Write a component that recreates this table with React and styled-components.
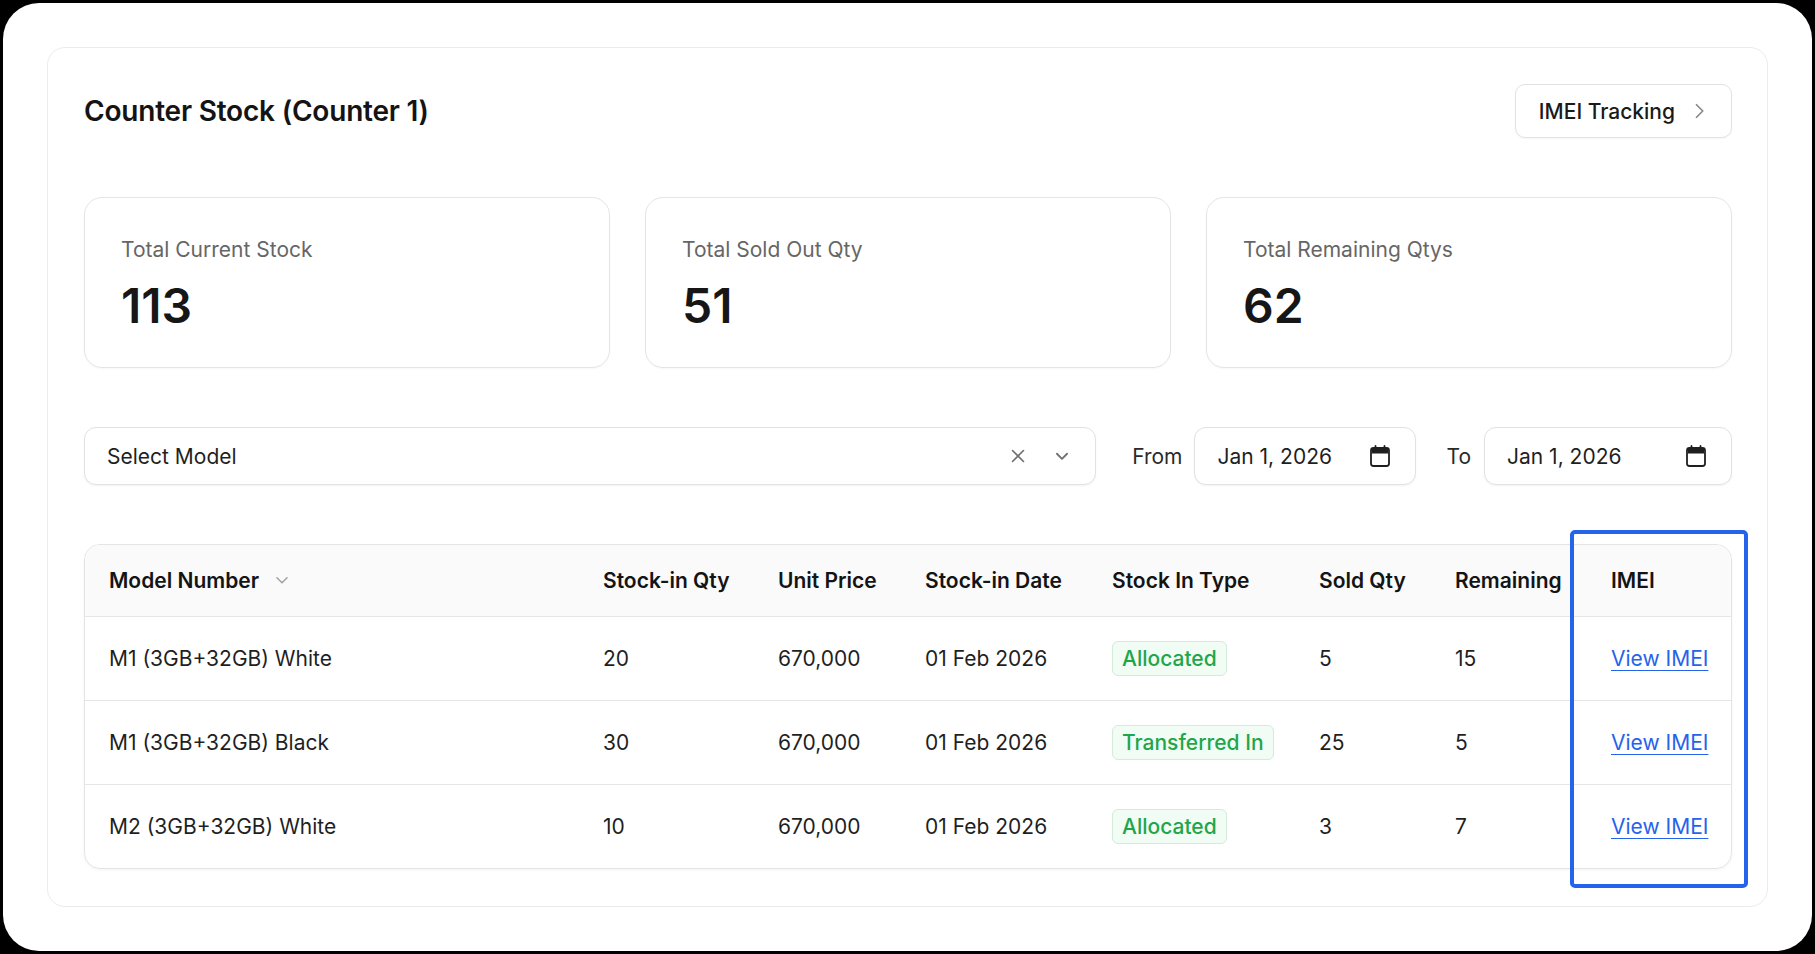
import React from 'react';
import styled, { createGlobalStyle } from 'styled-components';

const GlobalStyle = createGlobalStyle`
  * { box-sizing: border-box; }
  html, body { margin: 0; padding: 0; background: #000; }
  body { font-family: Inter, "Noto Sans", Arial, sans-serif; color: #1a1a1a; }
`;

const Frame = styled.div`
  margin: 3px;
  height: 948px;
  background: #fff;
  border-radius: 36px;
  padding: 44px 44px 0 44px;
`;

const Card = styled.div`
  border: 1px solid #ececec;
  border-radius: 18px;
  padding: 36px 35px 37px 36px;
  display: flex;
  flex-direction: column;
  gap: 59px;
`;

const Header = styled.div`
  display: flex;
  justify-content: space-between;
  align-items: center;
  height: 54px;
`;

const Title = styled.h1`
  margin: 0;
  font-size: 28px;
  font-weight: 600;
  color: #141414;
  letter-spacing: -0.2px;
`;

const OutlineButton = styled.button`
  display: flex;
  align-items: center;
  gap: 14px;
  height: 54px;
  padding: 0 22px 0 23px;
  background: #fff;
  border: 1px solid #e2e2e2;
  border-radius: 10px;
  font-family: inherit;
  font-size: 21px;
  font-weight: 500;
  color: #1a1a1a;
  box-shadow: 0 1px 2px rgba(0, 0, 0, 0.04);
`;

const Stats = styled.div`
  display: grid;
  grid-template-columns: repeat(3, 1fr);
  gap: 35px;
`;

const StatCard = styled.div`
  height: 171px;
  border: 1px solid #e4e4e4;
  border-radius: 18px;
  padding: 39px 36px 0;
  box-shadow: 0 1px 2px rgba(0, 0, 0, 0.03);
`;

const StatLabel = styled.div`
  font-size: 21px;
  line-height: 26px;
  color: #666;
`;

const StatValue = styled.div`
  margin-top: 15px;
  font-size: 48px;
  line-height: 56px;
  font-weight: 600;
  color: #161616;
`;

const Filters = styled.div`
  display: flex;
  align-items: center;
  height: 58px;
`;

const Field = styled.div`
  display: flex;
  align-items: center;
  height: 58px;
  flex: ${p => (p.$grow ? 1 : 'none')};
  width: ${p => (p.$width ? `${p.$width}px` : 'auto')};
  padding: 0 24px 0 22px;
  border: 1px solid #e2e2e2;
  border-radius: 12px;
  background: #fff;
  box-shadow: 0 1px 2px rgba(0, 0, 0, 0.05);
  font-size: 21px;
  color: #1f1f1f;
`;

const FieldText = styled.span`
  flex: 1;
`;

const FieldIcons = styled.span`
  display: flex;
  align-items: center;
  gap: 26px;
  color: #777;
`;

const FilterLabel = styled.span`
  font-size: 21px;
  color: #2a2a2a;
  margin: ${p => p.$margin};
`;

const TableWrap = styled.div`
  position: relative;
`;

const TableBox = styled.div`
  border: 1px solid #e4e4e4;
  border-radius: 16px;
  overflow: hidden;
  box-shadow: 0 1px 3px rgba(0, 0, 0, 0.05);
`;

const Table = styled.table`
  width: 100%;
  border-collapse: collapse;
  table-layout: fixed;
`;

const Th = styled.th`
  height: 71px;
  padding: 0 0 0 24px;
  background: #fafafa;
  text-align: left;
  font-size: 21px;
  font-weight: 600;
  color: #141414;
  border-bottom: 1px solid #e6e6e6;
  white-space: nowrap;
`;

const ThInner = styled.span`
  display: inline-flex;
  align-items: center;
  gap: 14px;
`;

const Tr = styled.tr`
  & + & td { border-top: 1px solid #e6e6e6; }
`;

const Td = styled.td`
  height: 84px;
  padding: 0 0 0 24px;
  font-size: 21px;
  color: #1f1f1f;
  white-space: nowrap;
`;

const Badge = styled.span`
  display: inline-block;
  height: 35px;
  line-height: 33px;
  padding: 0 9px;
  border: 1px solid #d3ebd9;
  border-radius: 6px;
  background: #f1fcf4;
  color: #1ea64a;
  font-size: 21px;
  font-weight: 500;
`;

const Link = styled.a`
  color: #2563eb;
  font-size: 21px;
  text-decoration: underline;
  text-underline-offset: 4px;
  text-decoration-thickness: 1px;
`;

const Highlight = styled.div`
  position: absolute;
  top: -14px;
  right: -16px;
  bottom: -19px;
  width: 178px;
  border: 4px solid #2563eb;
  border-radius: 5px;
  pointer-events: none;
`;

const Chevron = ({ dir = 'down', size = 16, color = 'currentColor', width = 1.6 }) => (
  <svg width={size} height={size} viewBox="0 0 16 16" fill="none" stroke={color} strokeWidth={width} strokeLinecap="round" strokeLinejoin="round">
    {dir === 'down' ? <path d="M3.5 6l4.5 4.5L12.5 6" /> : <path d="M6 3l5 5-5 5" />}
  </svg>
);

const CloseIcon = () => (
  <svg width="18" height="18" viewBox="0 0 18 18" fill="none" stroke="#6f6f6f" strokeWidth="1.6" strokeLinecap="round">
    <path d="M3.5 3.5l11 11M14.5 3.5l-11 11" />
  </svg>
);

const CalendarIcon = () => (
  <svg width="22" height="24" viewBox="0 0 22 24" fill="none">
    <rect x="2" y="4" width="18" height="18" rx="2.5" stroke="#1f1f1f" strokeWidth="1.8" />
    <path d="M2.9 5.5a1.6 1.6 0 011.6-1.6h13a1.6 1.6 0 011.6 1.6V9.5H2.9z" fill="#1f1f1f" />
    <path d="M6.5 2v4M15.5 2v4" stroke="#1f1f1f" strokeWidth="1.8" strokeLinecap="round" />
  </svg>
);

const stats = [
  { label: 'Total Current Stock', value: 113 },
  { label: 'Total Sold Out Qty', value: 51 },
  { label: 'Total Remaining Qtys', value: 62 },
];

const columns = [
  { key: 'model', title: 'Model Number', width: 494, sort: true },
  { key: 'qty', title: 'Stock-in Qty', width: 175 },
  { key: 'price', title: 'Unit Price', width: 147 },
  { key: 'date', title: 'Stock-in Date', width: 187 },
  { key: 'type', title: 'Stock In Type', width: 207 },
  { key: 'sold', title: 'Sold Qty', width: 136 },
  { key: 'remain', title: 'Remaining', width: 156 },
  { key: 'imei', title: 'IMEI' },
];

const rows = [
  { model: 'M1 (3GB+32GB) White', qty: 20, price: '670,000', date: '01 Feb 2026', type: 'Allocated', sold: 5, remain: 15 },
  { model: 'M1 (3GB+32GB) Black', qty: 30, price: '670,000', date: '01 Feb 2026', type: 'Transferred In', sold: 25, remain: 5 },
  { model: 'M2 (3GB+32GB) White', qty: 10, price: '670,000', date: '01 Feb 2026', type: 'Allocated', sold: 3, remain: 7 },
];

export default function App() {
  return (
    <>
      <GlobalStyle />
      <Frame>
        <Card>
          <Header>
            <Title>Counter Stock (Counter 1)</Title>
            <OutlineButton>
              IMEI Tracking
              <Chevron dir="right" size={20} color="#8a8a8a" width={1.4} />
            </OutlineButton>
          </Header>

          <Stats>
            {stats.map(s => (
              <StatCard key={s.label}>
                <StatLabel>{s.label}</StatLabel>
                <StatValue>{s.value}</StatValue>
              </StatCard>
            ))}
          </Stats>

          <Filters>
            <Field $grow>
              <FieldText>Select Model</FieldText>
              <FieldIcons>
                <CloseIcon />
                <Chevron size={18} color="#6f6f6f" />
              </FieldIcons>
            </Field>
            <FilterLabel $margin="0 12px 0 36px">From</FilterLabel>
            <Field $width={222}>
              <FieldText>Jan 1, 2026</FieldText>
              <CalendarIcon />
            </Field>
            <FilterLabel $margin="0 13px 0 30px">To</FilterLabel>
            <Field $width={248}>
              <FieldText>Jan 1, 2026</FieldText>
              <CalendarIcon />
            </Field>
          </Filters>

          <TableWrap>
            <TableBox>
              <Table>
                <colgroup>
                  {columns.map(c => (
                    <col key={c.key} style={c.width ? { width: c.width } : undefined} />
                  ))}
                </colgroup>
                <thead>
                  <tr>
                    {columns.map(c => (
                      <Th key={c.key}>
                        <ThInner>
                          {c.title}
                          {c.sort && <Chevron size={18} color="#a3a3a3" width={1.4} />}
                        </ThInner>
                      </Th>
                    ))}
                  </tr>
                </thead>
                <tbody>
                  {rows.map(r => (
                    <Tr key={r.model}>
                      <Td>{r.model}</Td>
                      <Td>{r.qty}</Td>
                      <Td>{r.price}</Td>
                      <Td>{r.date}</Td>
                      <Td><Badge>{r.type}</Badge></Td>
                      <Td>{r.sold}</Td>
                      <Td>{r.remain}</Td>
                      <Td><Link href="#">View IMEI</Link></Td>
                    </Tr>
                  ))}
                </tbody>
              </Table>
            </TableBox>
            <Highlight />
          </TableWrap>
        </Card>
      </Frame>
    </>
  );
}
